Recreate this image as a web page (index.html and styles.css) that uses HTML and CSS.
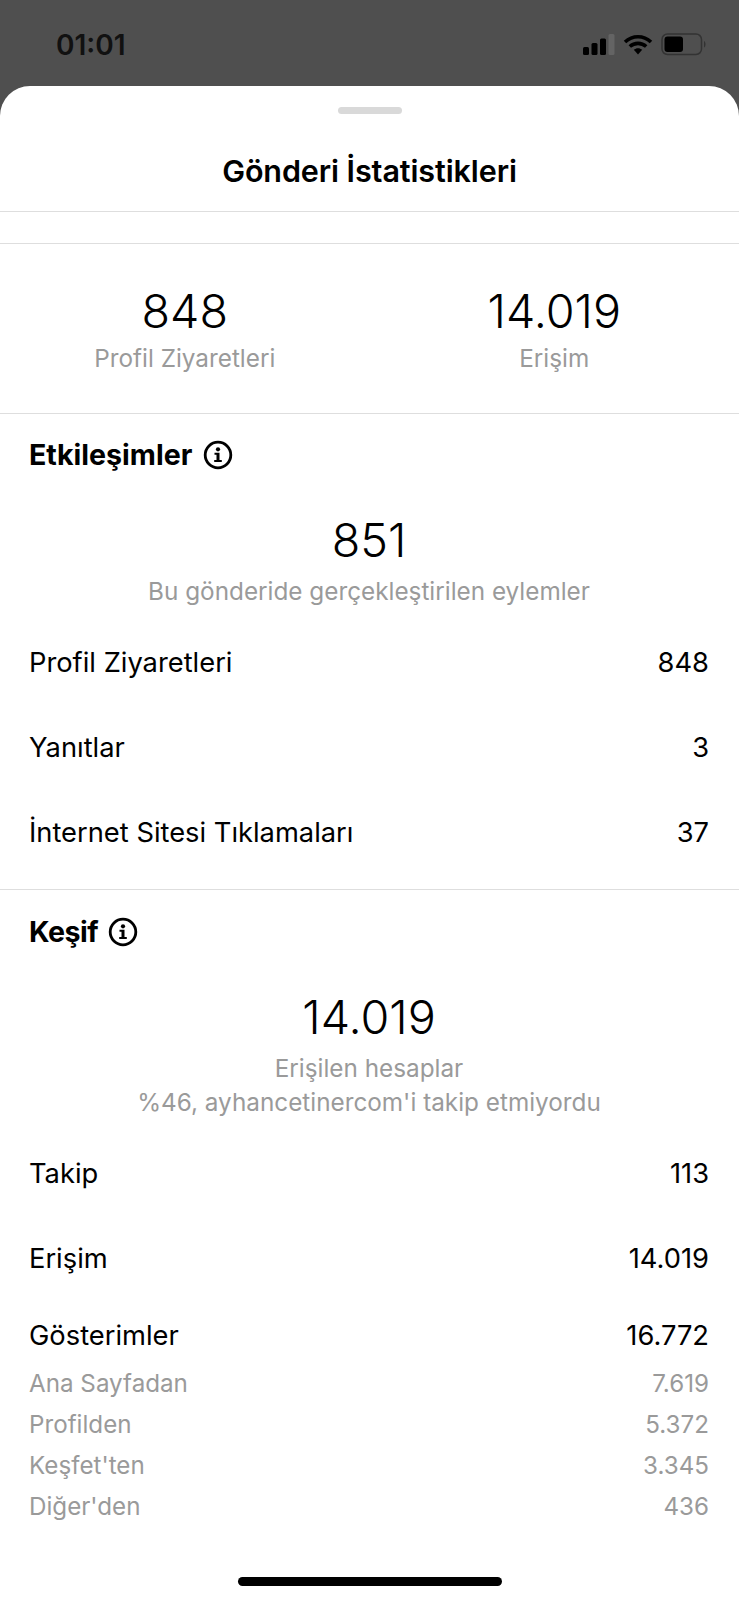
FILE: index.html
```html
<!DOCTYPE html>
<html lang="tr">
<head>
<meta charset="utf-8">
<title>Gönderi İstatistikleri</title>
<link rel="stylesheet" href="styles.css">
</head>
<body>
<div class="phone">
  <header class="status">
    <span class="time">01:01</span>
    <div class="status-icons">
      <svg class="signal" width="32" height="22" viewBox="0 0 32 22"><rect x="0" y="13" width="6" height="8" rx="1.5" fill="#000"/><rect x="8.5" y="9" width="6" height="12" rx="1.5" fill="#000"/><rect x="17" y="4.500" width="6" height="16.500" rx="1.500" fill="#000"/><rect x="25.500" y="0" width="6" height="21" rx="1.500" fill="#646464"/></svg>
      <svg class="wifi" width="30" height="22" viewBox="0 0 30 22"><path d="M2 8 C9.500 1 20.500 1 28 8 M6.800 12.500 C11.500 8.300 18.500 8.300 23.200 12.500" fill="none" stroke="#000" stroke-width="3.600"/><path d="M10.800 15.800 C13.300 13.700 16.700 13.700 19.200 15.800 L15 20.500 Z" fill="#000"/></svg>
      <svg class="battery" width="46" height="23" viewBox="0 0 46 23"><rect x="1" y="1" width="39.500" height="20.500" rx="5.500" fill="none" stroke="#333" stroke-width="1.500"/><rect x="3.500" y="3.500" width="18.500" height="15.500" rx="3" fill="#000"/><path d="M43 8 C45 9 45 13.500 43 14.500 Z" fill="#333"/></svg>
    </div>
  </header>
  <main class="sheet">
    <div class="handle"></div>
    <h1 class="title">Gönderi İstatistikleri</h1>
    <div class="gap-strip"></div>
    <section class="top-stats">
      <div class="top-stat"><div class="num">848</div><div class="muted">Profil Ziyaretleri</div></div>
      <div class="top-stat"><div class="num">14.019</div><div class="muted">Erişim</div></div>
    </section>
    <section class="block block-a">
      <h2 class="heading">Etkileşimler
        <svg class="info" width="30" height="30" viewBox="0 0 30 30"><circle cx="15" cy="15" r="12.800" fill="none" stroke="#000" stroke-width="2.800"/><circle cx="15" cy="9.300" r="2.100" fill="#000"/><path d="M11.500 12.800 H16.500 V20 H18.800 V22 H11.200 V20 H13.500 V14.800 H11.500 Z" fill="#000"/></svg>
      </h2>
      <div class="summary">
        <div class="num">851</div>
        <div class="muted">Bu gönderide gerçekleştirilen eylemler</div>
      </div>
      <div class="row"><span>Profil Ziyaretleri</span><span>848</span></div>
      <div class="row"><span>Yanıtlar</span><span>3</span></div>
      <div class="row"><span>İnternet Sitesi Tıklamaları</span><span>37</span></div>
    </section>
    <section class="block block-b">
      <h2 class="heading">Keşif
        <svg class="info" width="30" height="30" viewBox="0 0 30 30"><circle cx="15" cy="15" r="12.800" fill="none" stroke="#000" stroke-width="2.800"/><circle cx="15" cy="9.300" r="2.100" fill="#000"/><path d="M11.500 12.800 H16.500 V20 H18.800 V22 H11.200 V20 H13.500 V14.800 H11.500 Z" fill="#000"/></svg>
      </h2>
      <div class="summary">
        <div class="num">14.019</div>
        <div class="muted">Erişilen hesaplar<br>%46, ayhancetinercom'i takip etmiyordu</div>
      </div>
      <div class="row"><span>Takip</span><span>113</span></div>
      <div class="row"><span>Erişim</span><span>14.019</span></div>
      <div class="row row-last"><span>Gösterimler</span><span>16.772</span></div>
      <div class="sub"><span>Ana Sayfadan</span><span>7.619</span></div>
      <div class="sub"><span>Profilden</span><span>5.372</span></div>
      <div class="sub"><span>Keşfet'ten</span><span>3.345</span></div>
      <div class="sub"><span>Diğer'den</span><span>436</span></div>
    </section>
    <div class="home-bar"></div>
  </main>
</div>
</body>
</html>
```

FILE: styles.css
```css
* { box-sizing: border-box; }
html, body { margin: 0; padding: 0; }
body { width: 739px; height: 1600px; overflow: hidden; background: #4f4f4f; font-family: Inter, "Liberation Sans", sans-serif; color: #000; }
.phone { width: 739px; height: 1600px; display: flex; flex-direction: column; }
.status { height: 86px; flex: none; display: flex; justify-content: space-between; align-items: flex-start; padding: 28px 32px 0 56px; }
.time { font-size: 28px; line-height: 34px; font-weight: 600; color: #111; }
.status-icons { display: flex; align-items: center; gap: 8px; padding-top: 5px; }
.sheet { flex: 1; background: #fff; border-radius: 30px 30px 0 0; display: flex; flex-direction: column; position: relative; }
.handle { width: 64px; height: 7px; border-radius: 4px; background: #d9d9d9; margin: 21px auto 0; flex: none; }
.title { margin: 0; height: 98px; padding-top: 37px; line-height: 40px; font-size: 30.5px; font-weight: 600; text-align: center; border-bottom: 1.500px solid #dedede; flex: none; letter-spacing: -0.1px; }
.gap-strip { height: 32px; flex: none; border-bottom: 1.500px solid #dedede; }
.top-stats { height: 169px; flex: none; display: grid; grid-template-columns: 1fr 1fr; padding-top: 39px; text-align: center; }
.num { font-size: 46.7px; line-height: 56px; font-weight: 290; }
.muted { font-size: 24.3px; line-height: 34px; color: #9a9a9a; }
.top-stat .muted { margin-top: 2px; }
.block { flex: none; border-top: 1.500px solid #dedede; padding: 0 30px 0 29px; }
.block-a { height: 476px; }
.heading { margin: 0; padding-top: 24px; display: flex; align-items: center; gap: 11px; font-size: 28.6px; line-height: 34px; font-weight: 700; }
.block-b .heading { padding-top: 25px; gap: 10px; letter-spacing: -0.5px; }
.summary { text-align: center; padding-top: 40px; }
.summary .muted { margin-top: 6px; }
.row { display: flex; justify-content: space-between; font-size: 27.3px; line-height: 34px; height: 85px; }
.summary + .row { margin-top: 38px; }
.row-last { height: 44px; margin-top: -8px; }
.sub { display: flex; justify-content: space-between; font-size: 24.2px; line-height: 41px; color: #9a9a9a; }
.home-bar { position: absolute; left: 238px; bottom: 14px; width: 264px; height: 9px; border-radius: 5px; background: #000; }
```
